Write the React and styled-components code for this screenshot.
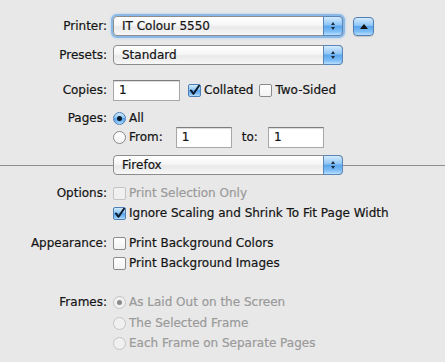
import React from "react"
import styled, { createGlobalStyle, css } from "styled-components"

const GlobalStyle = createGlobalStyle`
  html, body {
    margin: 0;
    padding: 0;
    background: #e8e8e8;
  }
  body {
    font-family: "DejaVu Sans", "Liberation Sans", sans-serif;
    font-size: 12px;
    color: #141414;
    -webkit-text-stroke: 0.2px currentColor;
  }
`

const aquaBlue = css`
  background: linear-gradient(
    #d4ebfd 0%,
    #8cc4f5 45%,
    #5aa6ee 50%,
    #7dbdf5 80%,
    #b8e0ff 100%
  );
`

const Dialog = styled.div`
  width: 445px;
  height: 362px;
  padding-top: 15px;
  box-sizing: border-box;
  overflow: hidden;
`

const Row = styled.div`
  display: grid;
  grid-template-columns: 107px 1fr;
  column-gap: 6px;
  align-items: center;
  height: ${({ h }) => h || 20}px;
  margin-top: ${({ mt }) => mt || 0}px;
`

const Label = styled.div`
  text-align: right;
  white-space: nowrap;
`

const Controls = styled.div`
  display: flex;
  align-items: center;
  white-space: nowrap;
`

const PopUp = styled.div`
  position: relative;
  width: 230px;
  height: 20px;
  box-sizing: border-box;
  border: 1px solid #8c8c8c;
  border-radius: 4px;
  background: linear-gradient(#ffffff 0%, #f6f6f6 45%, #e9e9e9 55%, #f7f7f7 100%);
  display: flex;
  align-items: center;
  padding-left: 8px;
  ${({ focused }) =>
    focused &&
    css`
      box-shadow: 0 0 0 2px #8ab9e8, 0 0 3px 2px #a9cdf0;
    `}
`

const Stepper = styled.div`
  position: absolute;
  right: -1px;
  top: -1px;
  bottom: -1px;
  width: 18px;
  border: 1px solid #5a86b8;
  border-radius: 0 4px 4px 0;
  ${aquaBlue};
  display: flex;
  flex-direction: column;
  align-items: center;
  justify-content: center;
  gap: 2px;
`

const Tri = styled.div`
  width: 0;
  height: 0;
  border-left: 2.5px solid transparent;
  border-right: 2.5px solid transparent;
  ${({ down }) =>
    down
      ? css`border-top: 3px solid #1c2a3a;`
      : css`border-bottom: 3px solid #1c2a3a;`}
`

const Disclosure = styled.div`
  width: 21px;
  height: 19px;
  box-sizing: border-box;
  border: 1px solid #4f7fb5;
  border-radius: 4px;
  ${aquaBlue};
  display: flex;
  align-items: center;
  justify-content: center;
  margin-left: 10px;
  margin-top: 2px;
  box-shadow: 0 1px 1px rgba(0, 0, 0, 0.15);
`

const BigTri = styled.div`
  width: 0;
  height: 0;
  border-left: 4px solid transparent;
  border-right: 4px solid transparent;
  border-bottom: 5px solid #111;
`

const TextField = styled.div`
  width: ${({ w }) => w}px;
  height: 21px;
  box-sizing: border-box;
  background: #fff;
  border: 1px solid #a8a8a8;
  border-top-color: #7d7d7d;
  box-shadow: inset 0 1px 1px rgba(0, 0, 0, 0.15);
  padding-left: 5px;
  display: flex;
  align-items: center;
`

const Box = styled.span`
  display: inline-flex;
  align-items: center;
  justify-content: center;
  flex: none;
  width: 13px;
  height: 13px;
  box-sizing: border-box;
  border: 1px solid ${({ disabled }) => (disabled ? "#c4c4c4" : "#8a8a8a")};
  border-radius: ${({ round }) => (round ? "50%" : "2px")};
  background: ${({ disabled }) =>
    disabled ? "#f0f0f0" : "linear-gradient(#ffffff, #f2f2f2)"};
  ${({ on, disabled }) => on && !disabled && aquaBlue};
  ${({ on, disabled }) => on && !disabled && css`border-color: #4f7fb5;`}
  margin-right: 3px;
`

const Dot = styled.span`
  width: 5px;
  height: 5px;
  border-radius: 50%;
  background: ${({ disabled }) => (disabled ? "#8a8a8a" : "#0d1a28")};
`

const Option = styled.span`
  display: inline-flex;
  align-items: center;
  color: ${({ disabled }) => (disabled ? "#9a9a9a" : "inherit")};
`

const Check = () => (
  <svg width="11" height="11" viewBox="0 0 11 11">
    <path
      d="M2 5.5 L4.5 8.8 L10 0.8"
      fill="none"
      stroke="#0e1b2b"
      strokeWidth="2"
      strokeLinecap="round"
      strokeLinejoin="round"
    />
  </svg>
)

const Checkbox = ({ on, disabled, children }) => (
  <Option disabled={disabled}>
    <Box on={on} disabled={disabled}>
      {on && <Check />}
    </Box>
    {children}
  </Option>
)

const Radio = ({ on, disabled, children }) => (
  <Option disabled={disabled}>
    <Box round on={on} disabled={disabled}>
      {on && <Dot disabled={disabled} />}
    </Box>
    {children}
  </Option>
)

const Select = ({ value, focused }) => (
  <PopUp focused={focused}>
    {value}
    <Stepper>
      <Tri />
      <Tri down />
    </Stepper>
  </PopUp>
)

const SeparatorRow = styled.div`
  display: flex;
  align-items: center;
  height: 20px;
  margin-top: 7px;
`

const Line = styled.div`
  height: 1px;
  background: #8f8f8f;
  flex: ${({ grow }) => (grow ? 1 : "none")};
  width: ${({ w }) => (w ? `${w}px` : "auto")};
`

const Spacer = styled.span`
  margin: 0 ${({ mr }) => mr || 0}px 0 ${({ ml }) => ml || 0}px;
`

export default function App() {
  return (
    <>
      <GlobalStyle />
      <Dialog>
        <Row>
          <Label>Printer:</Label>
          <Controls>
            <Select value="IT Colour 5550" focused />
            <Disclosure>
              <BigTri />
            </Disclosure>
          </Controls>
        </Row>
        <Row mt={10}>
          <Label>Presets:</Label>
          <Controls>
            <Select value="Standard" />
          </Controls>
        </Row>
        <Row h={22} mt={14}>
          <Label>Copies:</Label>
          <Controls>
            <TextField w={67}>1</TextField>
            <Spacer ml={8} />
            <Checkbox on>Collated</Checkbox>
            <Spacer ml={6} />
            <Checkbox>Two-Sided</Checkbox>
          </Controls>
        </Row>
        <Row h={16} mt={9}>
          <Label>Pages:</Label>
          <Controls>
            <Radio on>All</Radio>
          </Controls>
        </Row>
        <Row h={22} mt={0}>
          <Label />
          <Controls>
            <Radio>From:</Radio>
            <Spacer ml={13} />
            <TextField w={56}>1</TextField>
            <Spacer ml={10} mr={10}>
              to:
            </Spacer>
            <TextField w={56}>1</TextField>
          </Controls>
        </Row>
        <SeparatorRow>
          <Line w={113} />
          <Select value="Firefox" />
          <Line grow />
        </SeparatorRow>
        <Row mt={8}>
          <Label>Options:</Label>
          <Controls>
            <Checkbox disabled>Print Selection Only</Checkbox>
          </Controls>
        </Row>
        <Row mt={0}>
          <Label />
          <Controls>
            <Checkbox on>Ignore Scaling and Shrink To Fit Page Width</Checkbox>
          </Controls>
        </Row>
        <Row mt={10}>
          <Label>Appearance:</Label>
          <Controls>
            <Checkbox>Print Background Colors</Checkbox>
          </Controls>
        </Row>
        <Row mt={0}>
          <Label />
          <Controls>
            <Checkbox>Print Background Images</Checkbox>
          </Controls>
        </Row>
        <Row mt={19}>
          <Label>Frames:</Label>
          <Controls>
            <Radio on disabled>
              As Laid Out on the Screen
            </Radio>
          </Controls>
        </Row>
        <Row mt={1}>
          <Label />
          <Controls>
            <Radio disabled>The Selected Frame</Radio>
          </Controls>
        </Row>
        <Row mt={0}>
          <Label />
          <Controls>
            <Radio disabled>Each Frame on Separate Pages</Radio>
          </Controls>
        </Row>
      </Dialog>
    </>
  )
}
